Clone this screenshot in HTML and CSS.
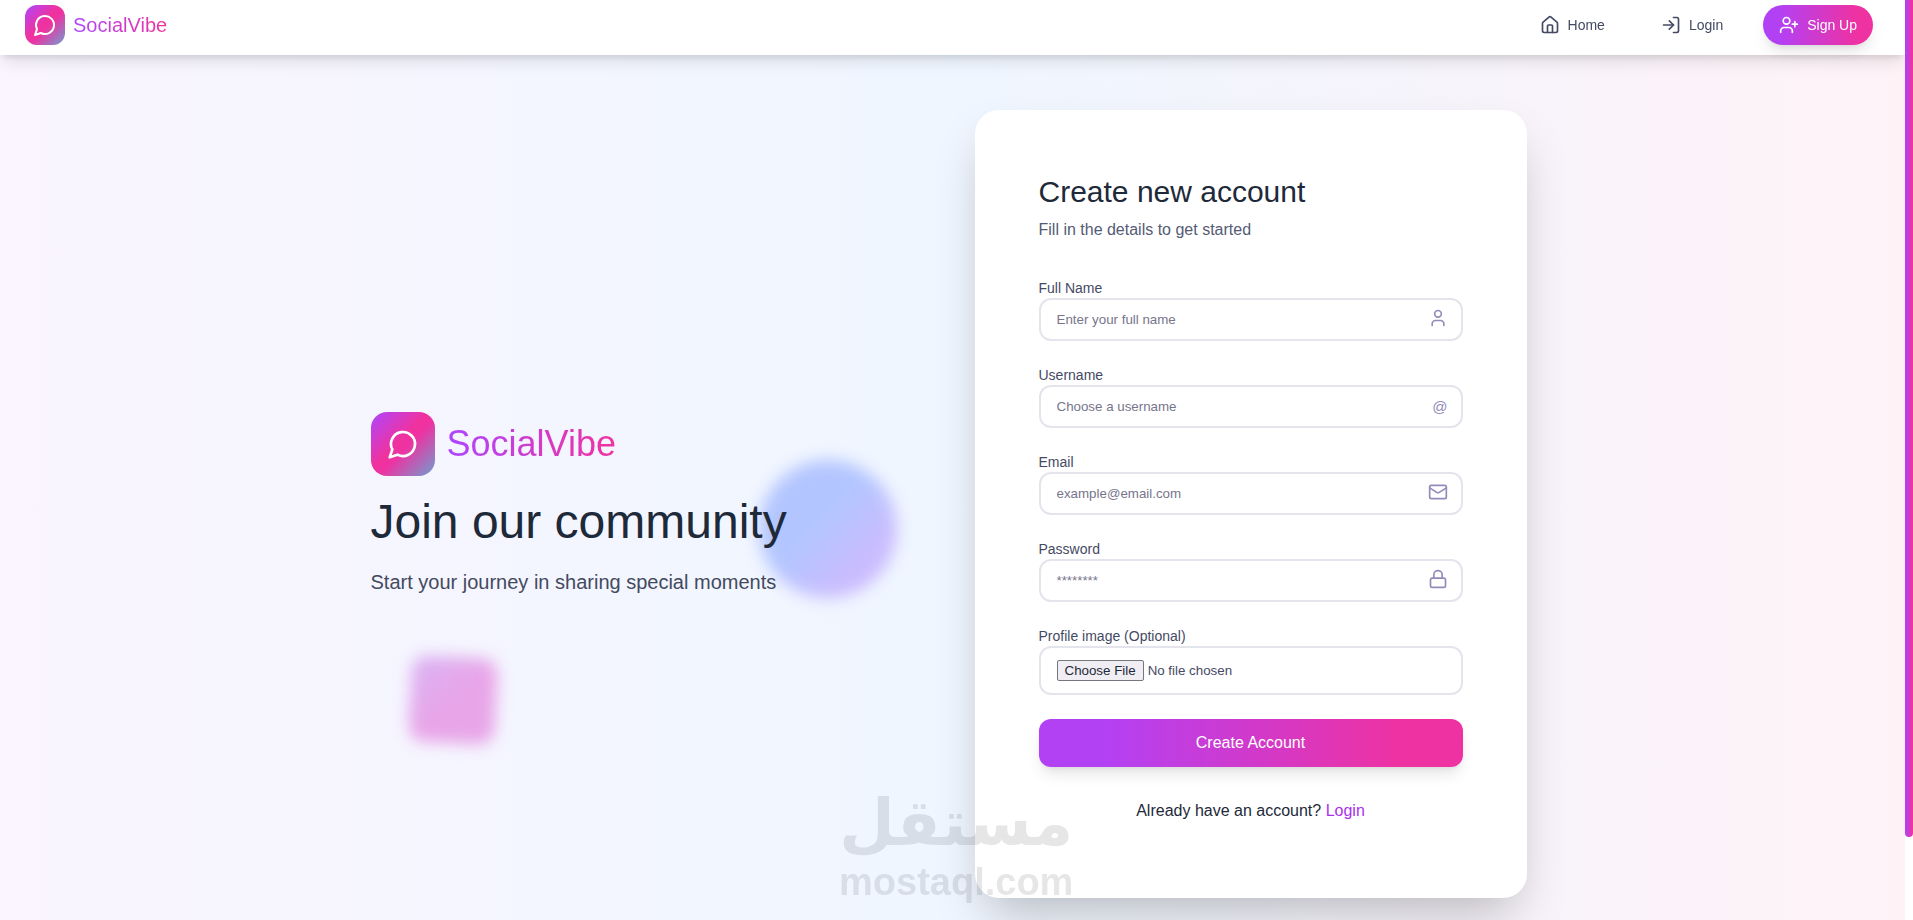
FILE: index.html
```html
<!DOCTYPE html>
<html lang="en">
<head>
    <meta charset="UTF-8">
    <meta name="viewport" content="width=device-width, initial-scale=1.0">
    <title>SocialVibe</title>
    <link rel="stylesheet" href="styles.css">
</head>
<body>
    <div class="page">
        <header class="navbar">
            <a class="brand" href="#">
                <span class="logo">
                    <svg class="icon" viewBox="0 0 24 24"><path d="M7.9 20A9 9 0 1 0 4 16.1L2 22Z"/></svg>
                </span>
                <span class="brand-name">SocialVibe</span>
            </a>
            <nav class="nav-links">
                <a class="nav-link" href="#">
                    <svg class="icon" viewBox="0 0 24 24"><path d="M15 21v-8a1 1 0 0 0-1-1h-4a1 1 0 0 0-1 1v8"/><path d="M3 10a2 2 0 0 1 .709-1.528l7-6a2 2 0 0 1 2.582 0l7 6A2 2 0 0 1 21 10v9a2 2 0 0 1-2 2H5a2 2 0 0 1-2-2z"/></svg>
                    Home
                </a>
                <a class="nav-link" href="#">
                    <svg class="icon" viewBox="0 0 24 24"><path d="m10 17 5-5-5-5"/><path d="M15 12H3"/><path d="M15 3h4a2 2 0 0 1 2 2v14a2 2 0 0 1-2 2h-4"/></svg>
                    Login
                </a>
                <a class="nav-link signup" href="#">
                    <svg class="icon" viewBox="0 0 24 24"><path d="M16 21v-2a4 4 0 0 0-4-4H6a4 4 0 0 0-4 4v2"/><circle cx="9" cy="7" r="4"/><path d="M19 8v6"/><path d="M22 11h-6"/></svg>
                    Sign Up
                </a>
            </nav>
        </header>

        <main class="content">
            <section class="intro">
                <div class="blob circle"></div>
                <div class="blob square"></div>
                <div class="intro-brand">
                    <span class="logo large">
                        <svg class="icon" viewBox="0 0 24 24"><path d="M7.9 20A9 9 0 1 0 4 16.1L2 22Z"/></svg>
                    </span>
                    <span class="brand-name large">SocialVibe</span>
                </div>
                <h1>Join our community</h1>
                <p>Start your journey in sharing special moments</p>
            </section>

            <section class="card">
                <h2>Create new account</h2>
                <p class="subtitle">Fill in the details to get started</p>
                <form>
                    <div class="form-group">
                        <label for="fullname">Full Name</label>
                        <div class="field">
                            <input type="text" id="fullname" placeholder="Enter your full name">
                            <svg class="icon field-icon" viewBox="0 0 24 24"><path d="M19 21v-2a4 4 0 0 0-4-4H9a4 4 0 0 0-4 4v2"/><circle cx="12" cy="7" r="4"/></svg>
                        </div>
                    </div>
                    <div class="form-group">
                        <label for="username">Username</label>
                        <div class="field">
                            <input type="text" id="username" placeholder="Choose a username">
                            <span class="field-icon at">@</span>
                        </div>
                    </div>
                    <div class="form-group">
                        <label for="email">Email</label>
                        <div class="field">
                            <input type="email" id="email" placeholder="example@email.com">
                            <svg class="icon field-icon" viewBox="0 0 24 24"><rect x="2" y="4" width="20" height="16" rx="2"/><path d="m22 7-8.991 5.727a2 2 0 0 1-2.009 0L2 7"/></svg>
                        </div>
                    </div>
                    <div class="form-group">
                        <label for="password">Password</label>
                        <div class="field">
                            <input type="password" id="password" placeholder="********">
                            <svg class="icon field-icon" viewBox="0 0 24 24"><rect x="3" y="11" width="18" height="11" rx="2"/><path d="M7 11V7a5 5 0 0 1 10 0v4"/></svg>
                        </div>
                    </div>
                    <div class="form-group">
                        <label for="image">Profile image (Optional)</label>
                        <div class="field">
                            <input type="file" id="image">
                        </div>
                    </div>
                    <button type="submit">Create Account</button>
                </form>
                <p class="switch">Already have an account? <a href="#">Login</a></p>
            </section>
        </main>
    </div>

    <div class="scrollbar">
        <div class="scroll-thumb"></div>
    </div>

    <div class="watermark">
        <span class="watermark-ar" lang="ar" dir="rtl">مستقل</span>
        <span class="watermark-en">mostaql.com</span>
    </div>
</body>
</html>
```
FILE: styles.css
```css
* {
    box-sizing: border-box;
}
body {
    display: grid;
    grid-template-columns: 1fr 8px;
    height: 100vh;
    margin: 0;
    overflow: hidden;
    font-family: "Liberation Sans", Arial, sans-serif;
    font-size: 16px;
    line-height: 24px;
    color: #1e2939;
}
h1, h2, p {
    margin: 0;
    font-weight: normal;
}
a {
    text-decoration: none;
}
.page {
    height: 100vh;
    overflow-y: auto;
    scrollbar-width: none;
    background: linear-gradient(to right, #faf5ff, #eff6ff 50%, #fef2f7);
}

/* Custom scrollbar */
.scrollbar {
    height: 100vh;
    background: #fff;
}
.scroll-thumb {
    height: 91%;
    border-radius: 0 0 4px 4px;
    background: linear-gradient(to right, #b041f7, #f0329e);
}
.icon {
    width: 20px;
    height: 20px;
    flex-shrink: 0;
    fill: none;
    stroke: currentColor;
    stroke-width: 2;
    stroke-linecap: round;
    stroke-linejoin: round;
}

/* Navbar */
.navbar {
    position: sticky;
    top: 0;
    z-index: 10;
    display: flex;
    justify-content: space-between;
    align-items: center;
    padding: 5px 32px 10px 25px;
    background: #fff;
    box-shadow: 0 10px 15px -3px rgba(0, 0, 0, 0.1), 0 4px 6px -2px rgba(0, 0, 0, 0.1);
}
.brand, .intro-brand {
    display: flex;
    align-items: center;
    gap: 8px;
}
.logo {
    display: flex;
    align-items: center;
    justify-content: center;
    width: 40px;
    height: 40px;
    border-radius: 12px;
    color: #fff;
    background: linear-gradient(135deg, #ad46ff, #f0329e 45%, #ee32a2 55%, #6f9fd0);
}
.logo .icon {
    width: 24px;
    height: 24px;
}
.logo.large {
    width: 64px;
    height: 64px;
    border-radius: 16px;
}
.logo.large .icon {
    width: 32px;
    height: 32px;
}
.brand-name {
    font-size: 20px;
    line-height: 28px;
    color: transparent;
    background: linear-gradient(to right, #ad46ff, #f0329e);
    -webkit-background-clip: text;
    background-clip: text;
}
.brand-name.large {
    font-size: 36px;
    line-height: 40px;
}
.nav-links {
    display: flex;
    gap: 24px;
}
.nav-link {
    display: flex;
    align-items: center;
    gap: 8px;
    height: 40px;
    padding: 0 16px;
    border-radius: 20px;
    font-size: 14px;
    color: #454a64;
}
.signup {
    color: #fff;
    background: linear-gradient(to right, #b341f4 15%, #ee32a2 85%);
    box-shadow: 0 10px 15px -3px rgba(0, 0, 0, 0.1), 0 4px 6px -4px rgba(0, 0, 0, 0.1);
}

/* Main area */
.content {
    display: grid;
    grid-template-columns: 1fr 1fr;
    gap: 52px;
    align-items: center;
    max-width: 1164px;
    margin: 0 auto;
    padding: 55px 8px 115px 0;
}
.intro {
    position: relative;
}
.intro-brand {
    gap: 12px;
    margin-bottom: 16px;
}
.intro h1 {
    position: relative;
    margin-bottom: 16px;
    font-size: 48px;
    line-height: 60px;
}
.intro p {
    position: relative;
    font-size: 20px;
    line-height: 28px;
    color: #434a5e;
}
.blob {
    position: absolute;
    filter: blur(8px);
}
.circle {
    top: 48px;
    right: 26px;
    width: 138px;
    height: 138px;
    border-radius: 50%;
    background: linear-gradient(135deg, #b3c5ff 45%, #cabcfe 75%);
}
.square {
    top: 245px;
    left: 39px;
    width: 86px;
    height: 86px;
    border-radius: 16px;
    background: linear-gradient(135deg, #d8b4f4, #e8a5e8 50%);
    transform: rotate(3deg);
}

/* Sign up card */
.card {
    padding: 64px 64px 75px;
    border-radius: 24px;
    background: #fff;
    box-shadow: 0 25px 50px -12px rgba(0, 0, 0, 0.25);
}
.card h2 {
    margin-bottom: 8px;
    font-size: 30px;
    line-height: 36px;
}
.subtitle {
    margin-bottom: 36px;
    color: #555b75;
}
.form-group {
    margin-bottom: 24px;
}
label {
    display: block;
    font-size: 14px;
    line-height: 20px;
    color: #454a64;
}
.field {
    position: relative;
}
input {
    display: block;
    width: 100%;
    padding: 12px 16px;
    border: 2px solid #e4e4ec;
    border-radius: 12px;
    background: #fff;
    font-family: inherit;
    color: #454a64;
}
input::placeholder {
    color: #77758c;
}
input::file-selector-button {
    padding: 2px 7px;
    border: 1px solid #76767f;
    border-radius: 2px;
    background: #f0edf3;
    color: #1e2939;
}
.field-icon {
    position: absolute;
    top: 10px;
    right: 15px;
    color: #928cba;
}
.at {
    font-size: 15px;
}
button {
    display: block;
    width: 100%;
    height: 48px;
    border: 0;
    border-radius: 12px;
    font-family: inherit;
    font-size: 16px;
    color: #fff;
    background: linear-gradient(to right, #b341f4 15%, #ee32a2 85%);
    box-shadow: 0 10px 15px -3px rgba(0, 0, 0, 0.1), 0 4px 6px -4px rgba(0, 0, 0, 0.1);
    cursor: pointer;
}
.switch {
    margin-top: 32px;
    text-align: center;
}
.switch a {
    color: #a931ee;
}

/* Watermark over the page */
.watermark {
    position: fixed;
    left: 839px;
    bottom: 17px;
    z-index: 20;
    display: flex;
    flex-direction: column;
    align-items: center;
    font-weight: bold;
    color: #1e1e28;
    opacity: 0.11;
    pointer-events: none;
}
.watermark-ar {
    font-family: "DejaVu Sans", sans-serif;
    font-size: 64px;
    line-height: 76px;
}
.watermark-en {
    font-size: 38px;
    line-height: 42px;
}
```
